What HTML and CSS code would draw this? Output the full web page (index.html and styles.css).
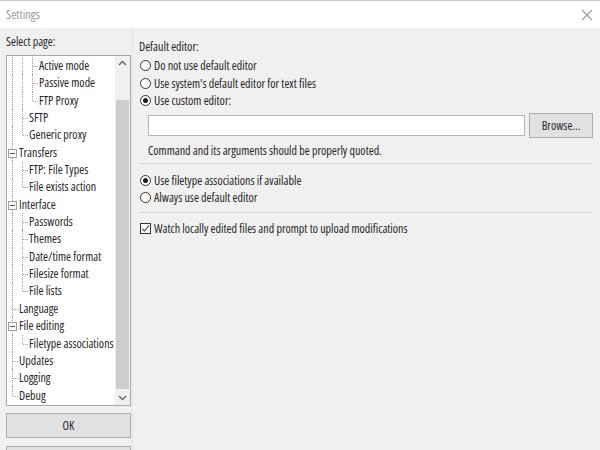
FILE: index.html
```html
<!DOCTYPE html>
<html>
<head>
<meta charset="utf-8">
<link rel="stylesheet" href="styles.css">
</head>
<body>
<div class="window">
  <div class="titlebar">
    <span class="title">Settings</span>
    <svg class="close" width="12" height="12" viewBox="0 0 12 12"><path d="M1 1L11 11M11 1L1 11" stroke="#9a9a9a" stroke-width="1.1" fill="none"/></svg>
  </div>
  <div class="main">
    <div class="side">
      <div class="side-label">Select page:</div>
      <div class="tree">
        <div class="tree-rows">
          <div class="row"><span class="c v"></span><span class="c v"></span><span class="c e more"></span><span class="t">Active mode</span></div>
          <div class="row"><span class="c v"></span><span class="c v"></span><span class="c e more"></span><span class="t">Passive mode</span></div>
          <div class="row"><span class="c v"></span><span class="c v"></span><span class="c e"></span><span class="t">FTP Proxy</span></div>
          <div class="row"><span class="c v"></span><span class="c e more"></span><span class="t">SFTP</span></div>
          <div class="row"><span class="c v"></span><span class="c e"></span><span class="t">Generic proxy</span></div>
          <div class="row"><span class="c v b"><i class="box"></i></span><span class="t">Transfers</span></div>
          <div class="row"><span class="c v"></span><span class="c e more"></span><span class="t">FTP: File Types</span></div>
          <div class="row"><span class="c v"></span><span class="c e"></span><span class="t">File exists action</span></div>
          <div class="row"><span class="c v b"><i class="box"></i></span><span class="t">Interface</span></div>
          <div class="row"><span class="c v"></span><span class="c e more"></span><span class="t">Passwords</span></div>
          <div class="row"><span class="c v"></span><span class="c e more"></span><span class="t">Themes</span></div>
          <div class="row"><span class="c v"></span><span class="c e more"></span><span class="t">Date/time format</span></div>
          <div class="row"><span class="c v"></span><span class="c e more"></span><span class="t">Filesize format</span></div>
          <div class="row"><span class="c v"></span><span class="c e"></span><span class="t">File lists</span></div>
          <div class="row"><span class="c e more"></span><span class="t">Language</span></div>
          <div class="row"><span class="c v b"><i class="box"></i></span><span class="t">File editing</span></div>
          <div class="row"><span class="c v"></span><span class="c e"></span><span class="t">Filetype associations</span></div>
          <div class="row"><span class="c e more"></span><span class="t">Updates</span></div>
          <div class="row"><span class="c e more"></span><span class="t">Logging</span></div>
          <div class="row"><span class="c e"></span><span class="t">Debug</span></div>
        </div>
        <div class="scrollbar">
          <svg class="arrow" width="15" height="15" viewBox="0 0 15 15"><path d="M4 9L7.5 5.5L11 9" stroke="#606060" stroke-width="1.3" fill="none"/></svg>
          <div class="track"><div class="thumb"></div></div>
          <svg class="arrow" width="15" height="15" viewBox="0 0 15 15"><path d="M4 6L7.5 9.5L11 6" stroke="#606060" stroke-width="1.3" fill="none"/></svg>
        </div>
      </div>
      <div class="btn ok">OK</div>
      <div class="btn cancel"></div>
    </div>
    <div class="content">
      <div class="label">Default editor:</div>
      <div class="opt"><span class="radio"></span>Do not use default editor</div>
      <div class="opt"><span class="radio"></span>Use system's default editor for text files</div>
      <div class="opt"><span class="radio on"></span>Use custom editor:</div>
      <div class="editrow">
        <div class="input"></div>
        <div class="btn browse">Browse...</div>
      </div>
      <div class="hint">Command and its arguments should be properly quoted.</div>
      <div class="sep"></div>
      <div class="opt"><span class="radio on"></span>Use filetype associations if available</div>
      <div class="opt"><span class="radio"></span>Always use default editor</div>
      <div class="sep sep2"></div>
      <div class="opt"><span class="check"><svg width="11" height="11" viewBox="0 0 11 11"><path d="M2 5.5L4.3 8L9 2.5" stroke="#333" stroke-width="1.1" fill="none"/></svg></span>Watch locally edited files and prompt to upload modifications</div>
    </div>
  </div>
</div>
</body>
</html>
```

FILE: styles.css
```css
html, body {
  margin: 0;
  padding: 0;
}
body {
  width: 600px;
  height: 450px;
  overflow: hidden;
  background: #f0f0f0;
  font-family: "Open Sans", "Liberation Sans", sans-serif;
  font-stretch: condensed;
  font-size: 12px;
  color: #262626;
}
.window {
  display: flex;
  flex-direction: column;
  height: 450px;
  border-top: 1px solid #c8c8c8;
  box-sizing: border-box;
}
.titlebar {
  height: 27px;
  background: #ffffff;
  display: flex;
  align-items: center;
  justify-content: space-between;
  padding: 0 7px 0 6px;
  flex: none;
}
.title {
  color: #9a9a9a;
  font-size: 12.5px;
}
.main {
  flex: 1;
  display: flex;
  min-height: 0;
  overflow: hidden;
}
.side {
  width: 125px;
  flex: none;
  padding-left: 6px;
  padding-right: 1px;
  border-right: 1px solid #e2e2e2;
  display: flex;
  flex-direction: column;
}
.side > * {
  flex: none;
}
.side-label {
  height: 27px;
  line-height: 28px;
}
.tree {
  height: 351px;
  box-sizing: border-box;
  border: 1px solid #a8a8a8;
  background: #ffffff;
  display: flex;
  overflow: hidden;
}
.tree-rows {
  flex: 1;
  min-width: 0;
  overflow: hidden;
  padding-top: 1px;
}
.row {
  height: 17.35px;
  display: flex;
  align-items: stretch;
  white-space: nowrap;
}
.c {
  width: 10px;
  flex: none;
  position: relative;
}
.c.v::before {
  content: "";
  position: absolute;
  left: 5px;
  top: 0;
  bottom: 0;
  border-left: 1px dotted #a0a0a0;
}
.c.e::before {
  content: "";
  position: absolute;
  left: 5px;
  top: 0;
  height: 9px;
  border-left: 1px dotted #a0a0a0;
}
.c.e.more::before {
  height: auto;
  bottom: 0;
}
.c.e::after {
  content: "";
  position: absolute;
  left: 6px;
  right: -1px;
  top: 9px;
  border-top: 1px dotted #a0a0a0;
}
.box {
  position: absolute;
  left: 1px;
  top: 5px;
  width: 7px;
  height: 7px;
  border: 1px solid #a0a0a0;
  background: #ffffff;
}
.box::after {
  content: "";
  position: absolute;
  left: 1px;
  right: 1px;
  top: 3px;
  border-top: 1px solid #505050;
}
.t {
  padding-left: 2px;
  line-height: 17px;
}
.scrollbar {
  width: 15px;
  flex: none;
  background: #f0f0f0;
  display: flex;
  flex-direction: column;
}
.arrow {
  flex: none;
  display: block;
}
.track {
  flex: 1;
  padding-top: 29px;
  padding-bottom: 1px;
  display: flex;
  flex-direction: column;
}
.thumb {
  flex: 1;
  margin: 0 1px;
  background: #cdcdcd;
}
.btn {
  box-sizing: border-box;
  background: #e1e1e1;
  border: 1px solid #adadad;
  display: flex;
  align-items: center;
  justify-content: center;
}
.ok {
  margin-top: 7px;
  height: 25px;
}
.cancel {
  margin-top: 8px;
  height: 25px;
}
.content {
  flex: 1;
  padding-left: 6px;
  padding-right: 7px;
  padding-top: 10px;
}
.label {
  height: 19px;
  line-height: 17px;
}
.opt {
  height: 17.5px;
  display: flex;
  align-items: center;
  white-space: nowrap;
}
.radio {
  width: 11px;
  height: 11px;
  box-sizing: border-box;
  border: 1px solid #333333;
  border-radius: 50%;
  background: #ffffff;
  margin-left: 1px;
  margin-right: 3px;
  position: relative;
  flex: none;
}
.radio.on::after {
  content: "";
  position: absolute;
  left: 2px;
  top: 2px;
  width: 5px;
  height: 5px;
  border-radius: 50%;
  background: #1a1a1a;
}
.check {
  width: 11px;
  height: 11px;
  box-sizing: border-box;
  border: 1px solid #333333;
  background: #ffffff;
  margin-left: 1px;
  margin-right: 3px;
  flex: none;
  display: flex;
}
.check svg {
  margin: -1px;
}
.editrow {
  display: flex;
  align-items: center;
  padding-left: 9px;
  margin-top: 3px;
  gap: 4px;
}
.input {
  flex: 1;
  height: 21px;
  box-sizing: border-box;
  border: 1px solid #b4b4b4;
  background: #ffffff;
}
.browse {
  width: 64px;
  height: 25px;
}
.hint {
  padding-left: 9px;
  height: 25px;
  line-height: 26px;
}
.sep {
  border-top: 1px solid #d6d6d6;
  margin-bottom: 8px;
}
.sep2 {
  margin-top: 5px;
  margin-bottom: 7px;
}
```
